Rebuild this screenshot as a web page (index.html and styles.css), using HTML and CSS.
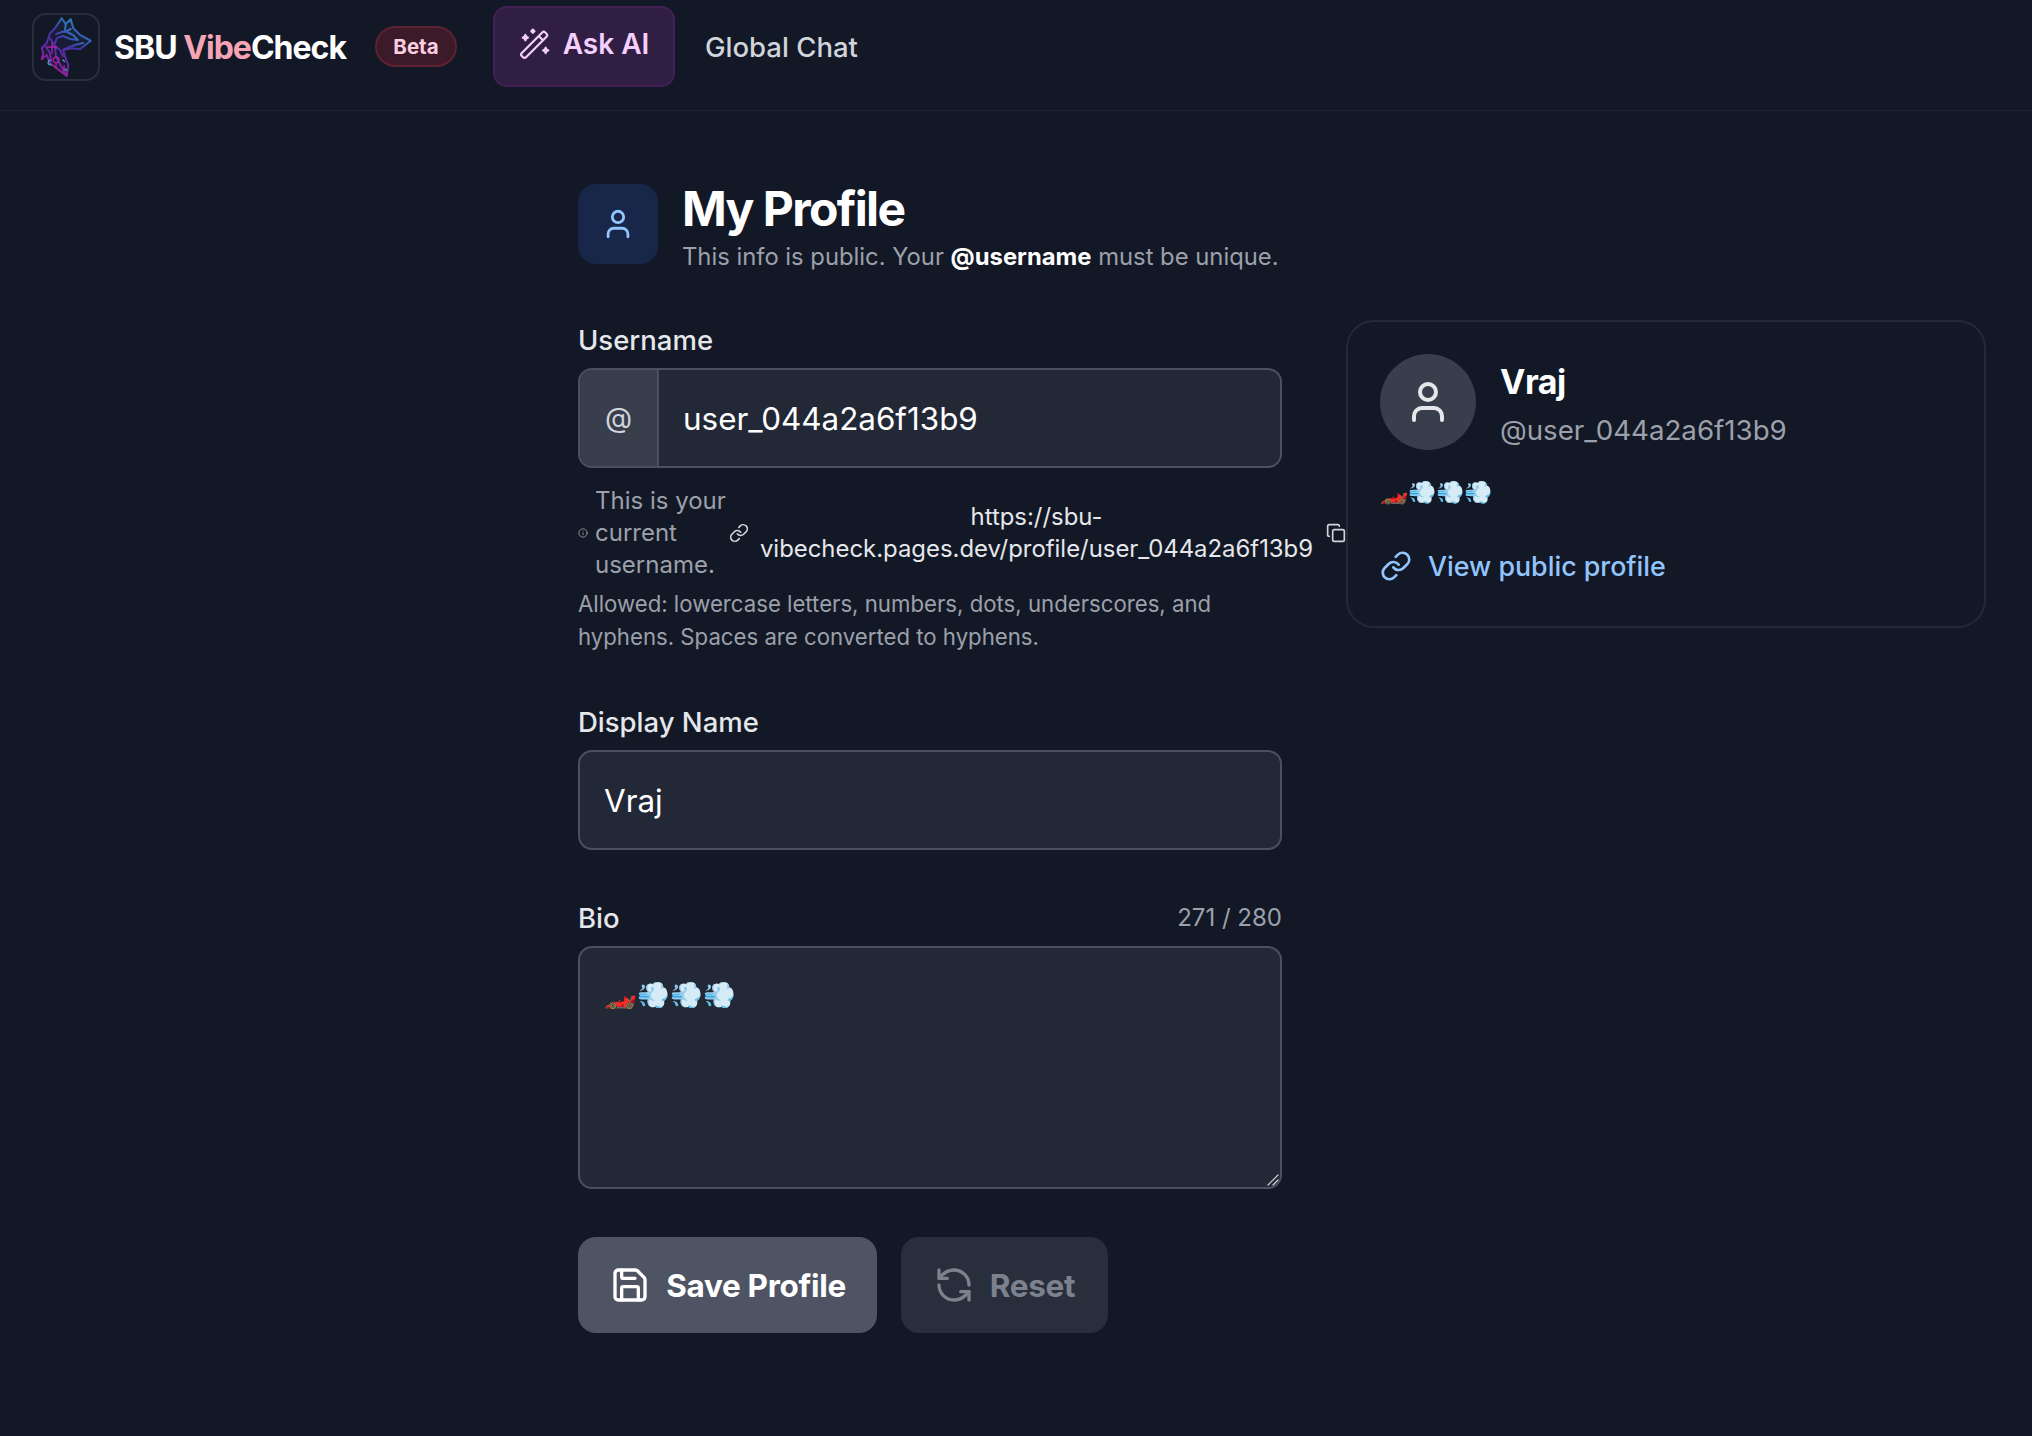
FILE: index.html
```html
<!DOCTYPE html>
<html lang="en">
<head>
<meta charset="utf-8">
<title>SBU VibeCheck</title>
<link rel="stylesheet" href="styles.css">
</head>
<body>
<header class="topbar">
  <div class="logo">
    <svg class="wolf" viewBox="2 2 64 64" stroke-width="1">
      <defs><linearGradient id="wolf" x1="0.75" y1="0" x2="0.2" y2="0.95"><stop offset="0" stop-color="#2b8fc4"/><stop offset="0.4" stop-color="#3f35a0"/><stop offset="0.75" stop-color="#6a27a8"/><stop offset="1" stop-color="#a81f9c"/></linearGradient></defs>
      <path fill="url(#wolf)" fill-opacity="0.12" stroke="url(#wolf)" d="M29.700 5.300L23 15.300 18 20.300 14.700 30.300 9.700 35.300 11.300 40.300 9.700 46.300 14.700 42 18 50.300 24.700 55.300 34.700 63 36.300 52 33 43.700 31.300 37 39.700 35.300 48 36.300 58.700 27.700 48 22 41.300 15.300 38.700 6.300 33.700 11z"/>
      <path stroke="url(#wolf)" d="M33.700 11l-1 8 6-3M24 21l9-3 8 4 5 5-8-1-7-3-6 2-3 7 6 5 3 6M18 25l5 9 1 10 5 9 5 9M14 34l4 6 1 8M31 37l6-3 6-2 8-2"/>
      <path stroke="#b021b0" stroke-width="1.300" d="M20 30v10M15.500 34h9M24 44a3 3 0 1 0 .1 0M24 50v4M32 53v5"/>
      <path stroke="#2fb8bc" stroke-width="1.200" d="M18 47a3 3 0 0 0-2 3 3 3 0 0 0 3 2M33 56l1.500 1.500M31 47l1.500 1.500"/>
    </svg>
  </div>
  <span class="brand">SBU <span class="brand-pink">Vibe</span>Check</span>
  <span class="beta">Beta</span>
  <a class="ask-ai">
    <svg class="ask-icon" viewBox="0 0 30 30">
      <path d="M2.600 23.400 21.800 4.200a2 2 0 0 1 2.800 0l1.200 1.200a2 2 0 0 1 0 2.800L6.600 27.400a2 2 0 0 1-2.800 0l-1.200-1.200a2 2 0 0 1 0-2.800zM18.500 7.500l4 4"/>
      <path d="M13 1.500l1.500 1.500-1.500 1.500-1.500-1.500zM6 6.500l.8 1.700 1.700.8-1.700.8-.8 1.700-.8-1.700-1.700-.8 1.700-.8zM25 18.500l.8 1.700 1.700.8-1.700.8-.8 1.700-.8-1.700-1.700-.8 1.700-.8z"/>
    </svg>
    Ask AI
  </a>
  <a class="nav-link">Global Chat</a>
</header>

<main class="page">
  <section class="title-row">
    <div class="title-icon">
      <svg class="icon-34" viewBox="0 0 24 24"><path d="M19 21v-2a4 4 0 0 0-4-4H9a4 4 0 0 0-4 4v2"/><circle cx="12" cy="7" r="4"/></svg>
    </div>
    <div>
      <h1>My Profile</h1>
      <p class="subtitle">This info is public. Your <strong>@username</strong> must be unique.</p>
    </div>
  </section>

  <div class="columns">
    <form class="form">
      <div class="field field-username">
        <label class="label">Username</label>
        <div class="input-group">
          <span class="addon">@</span>
          <span class="input-value">user_044a2a6f13b9</span>
        </div>
        <div class="note">
          <svg class="icon-info" viewBox="0 0 24 24"><circle cx="12" cy="12" r="10"/><path d="M12 16v-4M12 8h.01"/></svg>
          <span class="note-text">This is your current username.</span>
          <svg class="icon-link-sm" viewBox="0 0 24 24"><path d="M10 13a5 5 0 0 0 7.540.540l3-3a5 5 0 0 0-7.070-7.070l-1.720 1.710"/><path d="M14 11a5 5 0 0 0-7.540-.540l-3 3a5 5 0 0 0 7.070 7.070l1.710-1.710"/></svg>
          <span class="note-url">https://sbu-vibecheck.pages.dev/profile/user_044a2a6f13b9</span>
          <svg class="icon-copy" viewBox="0 0 24 24"><rect x="8" y="8" width="14" height="14" rx="2"/><path d="M4 16c-1.100 0-2-.9-2-2V4c0-1.100.9-2 2-2h10c1.100 0 2 .9 2 2"/></svg>
        </div>
        <p class="hint">Allowed: lowercase letters, numbers, dots, underscores, and hyphens. Spaces are converted to hyphens.</p>
      </div>

      <div class="field">
        <label class="label">Display Name</label>
        <div class="input-group"><span class="input-value input-plain">Vraj</span></div>
      </div>

      <div class="field">
        <div class="label-row"><label class="label">Bio</label><span class="counter">271 / 280</span></div>
        <div class="bio-wrap">
          <textarea class="bio" readonly>🏎️💨💨💨</textarea>
          <svg class="grip" viewBox="0 0 12 12"><path d="M1 11 11 1M6 11l5-5"/></svg>
        </div>
      </div>

      <div class="actions">
        <button type="button" class="btn btn-save">
          <svg class="icon-36" viewBox="0 0 24 24"><path d="M15.200 3a2 2 0 0 1 1.400.6l3.800 3.800a2 2 0 0 1 .6 1.400V19a2 2 0 0 1-2 2H5a2 2 0 0 1-2-2V5a2 2 0 0 1 2-2z"/><path d="M17 21v-7a1 1 0 0 0-1-1H8a1 1 0 0 0-1 1v7"/><path d="M7 3v4a1 1 0 0 0 1 1h7"/></svg>
          Save Profile
        </button>
        <button type="button" class="btn btn-reset">
          <svg class="icon-36" viewBox="0 0 24 24"><path d="M21 12a9 9 0 0 0-9-9 9.750 9.750 0 0 0-6.740 2.740L3 8"/><path d="M3 3v5h5"/><path d="M3 12a9 9 0 0 0 9 9 9.750 9.750 0 0 0 6.740-2.740L21 16"/><path d="M16 16h5v5"/></svg>
          Reset
        </button>
      </div>
    </form>

    <aside class="card">
      <div class="card-head">
        <div class="avatar">
          <svg class="icon-48" viewBox="0 0 24 24"><path d="M19 21v-2a4 4 0 0 0-4-4H9a4 4 0 0 0-4 4v2"/><circle cx="12" cy="7" r="4"/></svg>
        </div>
        <div>
          <div class="card-name">Vraj</div>
          <div class="card-handle">@user_044a2a6f13b9</div>
        </div>
      </div>
      <p class="card-bio">🏎️💨💨💨</p>
      <a class="card-link">
        <svg class="icon-32" viewBox="0 0 24 24"><path d="M10 13a5 5 0 0 0 7.540.540l3-3a5 5 0 0 0-7.070-7.070l-1.720 1.710"/><path d="M14 11a5 5 0 0 0-7.540-.540l-3 3a5 5 0 0 0 7.070 7.070l1.710-1.710"/></svg>
        View public profile
      </a>
    </aside>
  </div>
</main>
</body>
</html>
```

FILE: styles.css
```css
* { box-sizing: border-box; }
html, body { margin: 0; }
body {
  min-height: 1436px;
  background: #121826;
  color: #fff;
  font-family: Inter, "Noto Sans", sans-serif;
}
svg { display: block; flex: none; fill: none; stroke: currentColor; stroke-width: 2; stroke-linecap: round; stroke-linejoin: round; }

.topbar {
  height: 111px;
  padding: 6px 0 23px 32px;
  display: flex;
  align-items: center;
  border-bottom: 1px solid #1d2330;
}
.logo {
  width: 68px; height: 68px;
  border: 2px solid #282e3c;
  border-radius: 14px;
}
.wolf { width: 64px; height: 64px; }
.brand { margin-left: 14px; margin-top: 2px; font-size: 32px; font-weight: 700; letter-spacing: -1px; width: 245px; }
.brand-pink { color: #f4a5b5; }
.beta {
  margin-left: 16px; margin-top: -1px;
  width: 82px; height: 41px;
  display: flex; align-items: center; justify-content: center;
  border: 2px solid #5f2231; border-radius: 21px;
  background: #3d1a2a; color: #fbcfe0;
  font-size: 20.5px; font-weight: 700;
}
.ask-ai {
  margin-left: 36px;
  width: 182px; height: 81px;
  display: flex; align-items: center; justify-content: center; gap: 12px;
  border: 2px solid #431f56; border-radius: 14px;
  background: #301f42; color: #f5d0fe;
  font-size: 28px; font-weight: 600;
  padding-bottom: 6px;
}
.ask-icon { width: 32px; height: 32px; stroke-width: 2; }
.nav-link { margin-left: 30px; margin-top: 1px; font-size: 27.5px; font-weight: 500; color: #d1d5db; }

.page { margin-left: 578px; width: 1408px; padding-top: 73px; }
.title-row { display: flex; gap: 24px; height: 80px; margin-bottom: 56px; }
.title-icon {
  width: 80px; height: 80px;
  display: flex; align-items: center; justify-content: center;
  background: #18264a; border-radius: 18px; color: #93c5fd;
}
.icon-34 { width: 34px; height: 34px; }
h1 { margin: -3px 0 0; font-size: 48px; line-height: 56px; font-weight: 700; letter-spacing: -1.6px; }
.subtitle { margin: 4px 0 0; font-size: 23.8px; line-height: 32px; color: #9ca0aa; }
.subtitle strong { color: #fff; font-weight: 700; }

.columns { display: grid; grid-template-columns: 704px 640px; gap: 64px; align-items: start; }
.field { margin-bottom: 48px; }
.field-username { margin-bottom: 49px; }
.label { display: block; height: 40px; line-height: 40px; margin-bottom: 8px; font-size: 27.5px; font-weight: 500; color: #e5e7eb; }
.label-row { display: flex; justify-content: space-between; }
.counter { font-size: 24px; line-height: 40px; color: #9ca0aa; }
.input-group {
  height: 100px;
  display: flex;
  border: 2px solid #4b5060; border-radius: 14px;
  background: #222836;
  overflow: hidden;
}
.addon {
  width: 79px;
  display: flex; align-items: center; justify-content: center;
  background: #383e4c; border-right: 2px solid #4b5060;
  font-size: 28px; color: #d1d5db;
}
.input-value { display: flex; align-items: center; padding: 2px 0 0 24px; font-size: 31.4px; color: #fff; }
.input-plain { padding-left: 24px; }

.note {
  display: flex; align-items: center;
  width: 768px; margin-top: 17px;
  font-size: 24px; line-height: 32px;
}
.icon-info { width: 10px; height: 10px; color: #9ca0aa; }
.note-text { width: 135px; margin-left: 7px; color: #9ca0aa; }
.icon-link-sm { width: 20px; height: 20px; margin-left: -1px; color: #d1d5db; }
.note-url { width: 555px; margin-left: 10px; text-align: center; font-size: 23.9px; color: #e5e7eb; }
.icon-copy { width: 20px; height: 20px; margin-left: 12px; color: #d1d5db; }
.hint { margin: 6px 0 0; font-size: 22.2px; line-height: 33px; color: #9ca0aa; }

.bio-wrap { position: relative; height: 243px; }
.bio {
  display: block; width: 100%; height: 243px;
  padding: 27px 24px;
  border: 2px solid #4b5060; border-radius: 14px;
  background: #222836; color: #fff;
  font: 26.2px/40px Inter, "Noto Sans", sans-serif;
  outline: none;
  resize: none;
}
.grip { position: absolute; right: 3px; bottom: 3px; width: 12px; height: 12px; stroke: #d1d5db; stroke-width: 1.2; }
.actions { display: flex; gap: 24px; margin-top: 2px; }
.btn {
  height: 96px; border: 0; border-radius: 18px;
  display: flex; align-items: center; justify-content: center; gap: 16px;
  font: 700 31.5px Inter, "Noto Sans", sans-serif;
  letter-spacing: -0.3px;
}
.btn-save { width: 299px; background: #4e5463; color: #fff; padding-left: 7px; }
.btn-reset { width: 207px; background: #282e3c; color: #7c828d; }
.icon-36 { width: 40px; height: 40px; }

.card {
  height: 308px;
  padding: 32px;
  border: 2px solid #232936; border-radius: 28px;
}
.card-head { display: flex; gap: 24px; }
.avatar {
  width: 96px; height: 96px; border-radius: 50%;
  display: flex; align-items: center; justify-content: center;
  background: #383e4c; color: #e5e7eb;
}
.icon-48 { width: 48px; height: 48px; }
.card-name { font-size: 34px; line-height: 48px; font-weight: 700; margin-top: 4px; letter-spacing: -0.5px; }
.card-handle { font-size: 27.7px; line-height: 40px; color: #9ca0aa; margin-top: 4px; }
.card-bio { margin: 22px 0 0; font-size: 22.7px; line-height: 40px; }
.card-link { display: flex; align-items: center; gap: 16px; margin-top: 34px; font-size: 26.8px; line-height: 40px; font-weight: 500; color: #93c5fd; }
.icon-32 { width: 32px; height: 32px; }
```
